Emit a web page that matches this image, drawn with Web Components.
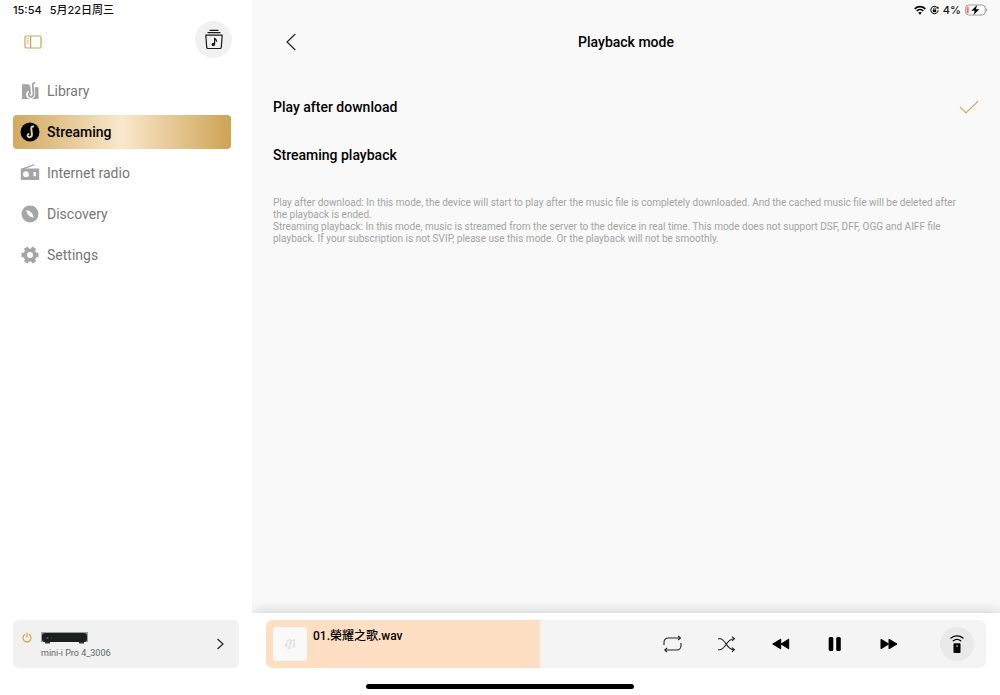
<!DOCTYPE html>
<html lang="en">
<head>
<meta charset="utf-8">
<meta name="viewport" content="width=device-width, initial-scale=1">
<title>Playback mode</title>
<style>
html, body { margin: 0; height: 100%; }
body { font-family: Roboto, "Noto Sans CJK SC", sans-serif; color: #000; background: #fff; overflow: hidden; }
</style>
</head>
<body>
<music-app></music-app>

<template id="music-app">
<style>
:host { display: grid; grid-template-columns: 252px minmax(0, 1fr); height: 100vh; }
.home { position: fixed; bottom: 6px; left: 50%; width: 268px; height: 5px; margin-left: -134px; border-radius: 3px; background: #000; }
</style>
<side-bar></side-bar>
<main-pane></main-pane>
<div class="home"></div>
</template>

<template id="side-bar">
<style>
:host { display: flex; flex-direction: column; box-sizing: border-box; padding: 0 13px 27px; background: #fff; position: relative; z-index: 1; }
.status { display: flex; gap: 8px; height: 20px; font: 500 11px/20px Inter, "Noto Sans CJK SC", sans-serif; color: #111; }
.tools { display: flex; justify-content: space-between; align-items: flex-end; height: 38px; padding: 0 7px 0 10px; }
button { border: 0; padding: 0; background: none; display: grid; place-items: center; color: inherit; }
.toggle { height: 32px; }
.queue { width: 37px; height: 37px; border-radius: 50%; background: #f1f1f1; }
nav { display: flex; flex-direction: column; gap: 7px; margin: 16px 8px 0 0; }
device-card { margin-top: auto; }
</style>
<div class="status"><span>15:54</span><span>5月22日周三</span></div>
<div class="tools">
  <button class="toggle" aria-label="Toggle sidebar">
    <svg width="20" height="20" viewBox="0 0 20 20" fill="none" stroke="#d3a24c" stroke-width="1.2"><rect x="2" y="4" width="16" height="12" rx="1.6"/><path d="M7.600 4v12"/><path d="M4 6.700h2M4 8.900h2M4 11.100h2" stroke-width=".9"/></svg>
  </button>
  <button class="queue" aria-label="Music queue">
    <svg width="20" height="22" viewBox="0 0 20 22" fill="none" stroke="#1a1a1a" stroke-width="1.2" stroke-linecap="round"><path d="M6 1.300h8M4 3.700h12"/><path d="M1.800 6.100h16.400l-.9 12.200a1.400 1.400 0 0 1-1.400 1.200H4.100a1.400 1.400 0 0 1-1.400-1.200z" stroke-linejoin="round"/><path d="M10.600 15.300V8.800c.3 1.500 2 1.700 1.900 3.400"/><circle cx="9.300" cy="15.500" r="1.700" fill="#1a1a1a" stroke="none"/></svg>
  </button>
</div>
<nav aria-label="Main">
  <nav-item label="Library"><svg width="20" height="20" viewBox="0 0 20 20"><path d="M2 3.200h6.500l3 3H18.500V18H2z" fill="#a5a5a5"/><path d="M15 1.200c-2.500 0-2.800 1.300-2.600 3.300l.7 8.500c0 3.600-4.600 3.800-4.900 1-.1-1.200.4-2 1.200-2.400" fill="none" stroke="#fff" stroke-width="4.200"/><path d="M15.200 1.800c-2.200 0-2.600 1-2.400 3l.7 8.200c.1 3.400-4.400 3.600-4.800 1-.1-1.200.5-2.100 1.700-2.300" fill="none" stroke="#a5a5a5" stroke-width="1.800"/></svg></nav-item>
  <nav-item label="Streaming" current><svg width="20" height="20" viewBox="0 0 20 20"><circle cx="10" cy="10" r="9.500" fill="#000"/><path d="M14 4.500c-2.200-.3-3 .6-2.700 2.500l.6 5.200c.4 3.500-3.900 3.900-4.300 1.500-.1-1.100.7-1.800 1.700-1.700" fill="none" stroke="#f0d5a6" stroke-width="1.900"/></svg></nav-item>
  <nav-item label="Internet radio"><svg width="20" height="20" viewBox="0 0 20 20"><path d="M1.500 6.300 14.300 1.600" stroke="#a5a5a5" stroke-width="1.400"/><path fill-rule="evenodd" fill="#a5a5a5" d="M1.600 5.500h16.800a.8.8 0 0 1 .8.800v10a.8.8 0 0 1-.8.800H1.600a.8.8 0 0 1-.8-.8v-10a.8.8 0 0 1 .8-.8zM6 8.300a2.900 2.900 0 1 0 0 5.800 2.900 2.900 0 0 0 0-5.800zM13.500 9v4.300h2.400V9z"/></svg></nav-item>
  <nav-item label="Discovery"><svg width="20" height="20" viewBox="0 0 20 20"><circle cx="10" cy="10" r="8.500" fill="#a5a5a5"/><path d="M6.300 6.300c3.700.2 6.600 2.800 7.400 7.400-4-.5-6.800-3.200-7.400-7.400z" fill="#fff"/></svg></nav-item>
  <nav-item label="Settings"><svg width="20" height="20" viewBox="0 0 20 20"><circle cx="10" cy="10" r="4.800" fill="none" stroke="#a5a5a5" stroke-width="3.600"/><g stroke="#a5a5a5" stroke-width="4.400" stroke-linejoin="round"><path d="M15.500 10h3M1.500 10h3M12.700 14.700l1.500 2.600M7.300 14.700l-1.500 2.600M12.700 5.300l1.500-2.600M7.300 5.300 5.800 2.700"/></g></svg></nav-item>
</nav>
<device-card name="mini-i Pro 4_3006"></device-card>
</template>

<template id="nav-item">
<style>
:host { display: block; }
a { display: flex; align-items: center; gap: 7px; box-sizing: border-box; height: 34px; padding-left: 7px; border-radius: 4px; font-size: 14px; line-height: 20px; color: #777; text-decoration: none; }
:host([current]) a { color: #000; font-weight: 500; background: linear-gradient(90deg, #d1a95f 0%, #fae7cb 50%, #cca455 100%); }
slot { display: block; width: 20px; height: 20px; }
</style>
<a href="#"><slot></slot><span></span></a>
</template>

<template id="device-card">
<style>
:host { display: block; }
button { display: grid; grid-template-columns: 10px 1fr 12px; gap: 9px; align-items: center; width: 100%; height: 48px; box-sizing: border-box; padding: 0 13px 0 9px; border: 0; border-radius: 6px; background: #f1f1f1; font: inherit; color: #666; text-align: left; }
.power { align-self: start; margin-top: 12px; }
.info { display: flex; flex-direction: column; gap: 3px; padding-top: 3px; font-size: 9px; line-height: 12px; }
svg { display: block; }
</style>
<button>
  <svg class="power" width="10" height="11" viewBox="0 0 10 11" fill="none" stroke="#d3a24c" stroke-width="1.200" stroke-linecap="round"><path d="M5 1v4M2.700 2.600a4 4 0 1 0 4.600 0"/></svg>
  <span class="info">
    <svg width="48" height="12" viewBox="0 0 48 12"><path fill="#9aa09c" d="M0 0h47v10H0z"/><rect x="1" y="1" width="45" height="9" rx="3" fill="#1d1f1e"/><path d="M4 10h5v1.500H4zM38 10h5v1.500h-5z" fill="#333"/><circle cx="6.500" cy="6" r="1.100" fill="#6f5a35"/><circle cx="10.500" cy="6" r=".6" fill="#555"/></svg>
    <span class="name"></span>
  </span>
  <svg width="12" height="12" viewBox="0 0 12 12" fill="none" stroke="#222" stroke-width="1.200"><path d="m3.500 1 5.500 5-5.500 5"/></svg>
</button>
</template>

<template id="main-pane">
<style>
:host { display: flex; flex-direction: column; min-width: 0; background: #f9f9f9; }
</style>
<status-icons></status-icons>
<page-header>Playback mode</page-header>
<playback-options></playback-options>
<player-bar track="01.榮耀之歌.wav"></player-bar>
</template>

<template id="status-icons">
<style>
:host { display: flex; justify-content: flex-end; align-items: center; gap: 4px; height: 20px; padding-right: 12px; font: 500 11px/20px Inter, sans-serif; color: #111; }
</style>
<svg width="12" height="10" viewBox="0 0 12 10" fill="none" stroke="#000" stroke-width="1.700"><path d="M.7 3.800a7.600 7.600 0 0 1 10.600 0M2.700 6a4.700 4.700 0 0 1 6.600 0"/><path d="M6 9.700 4.200 7.800a2.600 2.600 0 0 1 3.600 0z" fill="#000" stroke="none"/></svg>
<svg width="9" height="10" viewBox="0 0 9 10" fill="none" stroke="#000"><path d="M7.700 3.200A3.700 3.700 0 1 0 8.200 5.300" stroke-width="1"/><path d="M6.300 3.500h2.600l-1-2.300z" fill="#000" stroke="none"/><path d="M2.800 4.600h3.400v2.600H2.800z" fill="#000" stroke="none"/><path d="M3.500 4.700v-.8a1 1 0 0 1 2 0v.8" stroke-width=".7"/></svg>
<span>4%</span>
<svg width="23" height="12" viewBox="0 0 23 12"><rect x=".6" y="1" width="19.600" height="10" rx="3" fill="#fff" stroke="#999"/><path d="M21.200 4.300c1.500.5 1.500 2.900 0 3.400z" fill="#999"/><rect x="1.700" y="2.400" width="2" height="7.200" rx="1" fill="#ff6b61"/><path d="M12 1 6.300 6.800h3.400L8.500 11 14.400 5.200H11z" fill="#000"/></svg>
</template>

<template id="page-header">
<style>
:host { display: grid; grid-template-columns: 40px 1fr 40px; align-items: center; height: 44px; padding: 0 19px; }
button { display: grid; place-items: center; width: 40px; height: 40px; padding: 0; border: 0; background: none; }
h1 { margin: 0; text-align: center; font-size: 14px; font-weight: 500; line-height: 20px; }
</style>
<button aria-label="Back"><svg width="16" height="18" viewBox="0 0 16 18" fill="none" stroke="#222" stroke-width="1.200"><path d="M12.300 1 4 9l8.300 8"/></svg></button>
<h1><slot></slot></h1>
</template>

<template id="playback-options">
<style>
:host { display: block; flex: 1; padding: 19px 21px 0; }
fieldset { margin: 0; padding: 0; border: 0; min-width: 0; }
label { display: flex; align-items: center; height: 48px; font-size: 14px; font-weight: 500; line-height: 20px; }
label span { flex: 1; }
input { appearance: none; margin: 0; width: 1px; height: 1px; }
svg { visibility: hidden; }
input:checked + svg { visibility: visible; }
.notes { margin-top: 18px; padding-right: 8px; font-size: 10px; line-height: 12px; color: #a3a3a3; }
p { margin: 0; }
</style>
<fieldset aria-label="Playback mode">
  <label><span>Play after download</span><input type="radio" name="mode" checked><svg width="20" height="14" viewBox="0 0 20 14" fill="none" stroke="#d8ad60" stroke-width="1.200"><path d="m1 7 6 6L19 1.300"/></svg></label>
  <label><span>Streaming playback</span><input type="radio" name="mode"><svg width="20" height="14" viewBox="0 0 20 14" fill="none" stroke="#d8ad60" stroke-width="1.200"><path d="m1 7 6 6L19 1.300"/></svg></label>
</fieldset>
<div class="notes">
  <p>Play after download: In this mode, the device will start to play after the music file is completely downloaded. And the cached music file will be deleted after the playback is ended.</p>
  <p>Streaming playback: In this mode, music is streamed from the server to the device in real time. This mode does not support DSF, DFF, OGG and AIFF file playback. If your subscription is not SVIP, please use this mode. Or the playback will not be smoothly.</p>
</div>
</template>

<template id="player-bar">
<style>
:host { display: block; padding: 7px 14px 27px; background: #fff; box-shadow: 0 0 14px rgba(0, 0, 0, .2); }
.card { display: flex; align-items: center; height: 48px; padding: 0 12px 0 7px; border-radius: 7px; background: linear-gradient(90deg, #ffdfc4 38%, #f4f4f4 38%); }
.cover { display: grid; place-items: center; width: 34px; height: 34px; border-radius: 4px; background: #f9f9f9; }
.title { flex: 1; align-self: flex-start; margin: 6px 0 0 6px; font-size: 12px; font-weight: 500; line-height: 20px; }
button { display: grid; place-items: center; width: 54px; height: 40px; padding: 0; border: 0; background: none; }
.remote { width: 34px; height: 34px; margin-left: 24px; border-radius: 50%; background: #e9e9e9; }
</style>
<div class="card">
  <div class="cover"><svg width="12" height="12" viewBox="0 0 12 12" fill="none" stroke="#e2e2e2" stroke-width="1.200"><path d="M2.800 7.300V2.800L5.800 1.500v8.300M7 7V3l3.500-1.300v6"/><circle cx="1.900" cy="7.500" r=".9"/><circle cx="4.900" cy="10" r=".9"/><circle cx="9.600" cy="8" r=".9"/></svg></div>
  <span class="title"></span>
  <button aria-label="Repeat"><svg width="20" height="20" viewBox="0 0 20 20" fill="none" stroke="#222" stroke-width="1.100"><path d="M1 11V8.200a4.200 4.200 0 0 1 4.200-4.200h12M18 9v2.800a4.200 4.200 0 0 1-4.200 4.200H2"/><path d="m15.200 2 2.200 2-2.200 2M4 14l-2.200 2L4 18"/></svg></button>
  <button aria-label="Shuffle"><svg width="20" height="20" viewBox="0 0 20 20" fill="none" stroke="#222" stroke-width="1.100"><path d="M1 4.700h2c5.800 0 6.200 11 14 11M1 15.700h2c5.800 0 6.200-11 14-11"/><path d="m15 2.600 2.400 2.100L15 6.800M15 13.600l2.400 2.100-2.400 2.100"/></svg></button>
  <button aria-label="Previous"><svg width="18" height="12" viewBox="0 0 18 12" stroke="#000" stroke-linejoin="round"><path d="M8.700 1.200v9.600L.7 6zM16.700 1.200v9.600L9 6z"/></svg></button>
  <button aria-label="Pause"><svg width="14" height="14" viewBox="0 0 14 14"><rect x=".7" width="4.600" height="14" rx="1.500"/><rect x="8.200" width="4.600" height="14" rx="1.500"/></svg></button>
  <button aria-label="Next"><svg width="18" height="12" viewBox="0 0 18 12" stroke="#000" stroke-linejoin="round"><path d="M1 1.200v9.600L8.700 6zM9 1.200v9.600L17 6z"/></svg></button>
  <button class="remote" aria-label="Remote control"><svg width="14" height="20" viewBox="0 0 14 20" fill="none" stroke="#000" stroke-width="1.300" stroke-linecap="round"><path d="M1 4a9.500 9.500 0 0 1 12 0M3.300 6.800a6 6 0 0 1 7.400 0"/><path fill="#000" stroke="none" fill-rule="evenodd" d="M4.200 9.200h5.600a.7.7 0 0 1 .7.700v8.400a.7.7 0 0 1-.7.700H4.200a.7.7 0 0 1-.7-.7V9.900a.7.7 0 0 1 .7-.7zM7 11.300a.8.8 0 1 0 0 1.600.8.8 0 0 0 0-1.600z"/></svg></button>
</div>
</template>

<script>
class TemplateElement extends HTMLElement {
  constructor() {
    super();
    const template = document.getElementById(this.localName);
    this.attachShadow({ mode: "open" }).append(template.content.cloneNode(true));
  }
  setText(selector, value) {
    this.shadowRoot.querySelector(selector).textContent = value || "";
  }
}

class NavItem extends TemplateElement {
  connectedCallback() {
    this.setText("span", this.getAttribute("label"));
    if (this.hasAttribute("current")) {
      this.shadowRoot.querySelector("a").setAttribute("aria-current", "page");
    }
  }
}

class DeviceCard extends TemplateElement {
  connectedCallback() { this.setText(".name", this.getAttribute("name")); }
}

class PlayerBar extends TemplateElement {
  connectedCallback() { this.setText(".title", this.getAttribute("track")); }
}

customElements.define("nav-item", NavItem);
customElements.define("device-card", DeviceCard);
customElements.define("player-bar", PlayerBar);
customElements.define("status-icons", class extends TemplateElement {});
customElements.define("page-header", class extends TemplateElement {});
customElements.define("playback-options", class extends TemplateElement {});
customElements.define("side-bar", class extends TemplateElement {});
customElements.define("main-pane", class extends TemplateElement {});
customElements.define("music-app", class extends TemplateElement {});
</script>
</body>
</html>
